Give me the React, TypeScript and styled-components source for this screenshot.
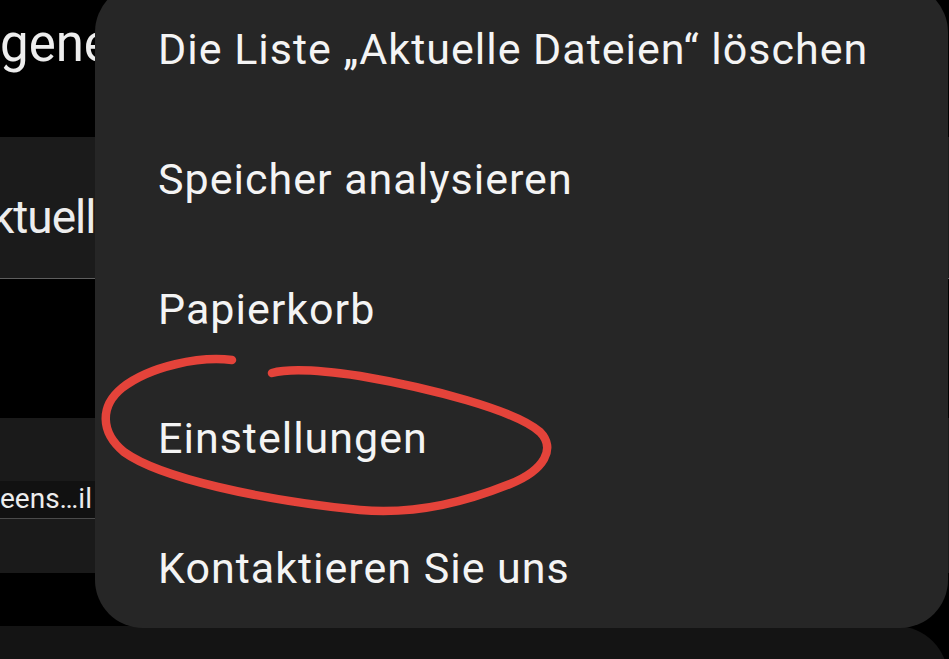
import React from "react";
import styled, { createGlobalStyle } from "styled-components";

const GlobalStyle = createGlobalStyle`
  html, body {
    margin: 0;
    padding: 0;
    background: #000;
    overflow: hidden;
  }
  * { box-sizing: border-box; }
`;

const Screen = styled.div`
  position: relative;
  width: 949px;
  height: 659px;
  overflow: hidden;
  background: #000;
  font-family: Roboto, "Noto Sans", "Liberation Sans", sans-serif;
  color: #ededed;
`;

const Page = styled.div`
  display: flex;
  flex-direction: column;
  width: 100%;
`;

const Header = styled.div`
  height: 137px;
  padding-top: 19px;
  font-size: 51px;
  line-height: 50px;
  white-space: nowrap;
`;

const RecentCard = styled.div`
  height: 142px;
  padding-top: 56px;
  background: #1b1b1b;
  border-bottom: 1px solid #5e5e5e;
  font-size: 46px;
  line-height: 48px;
  letter-spacing: -1px;
  white-space: nowrap;
`;

const Clipped = styled.span<{ $shift: number }>`
  display: inline-block;
  margin-left: ${(p) => p.$shift}px;
`;

const Gap = styled.div<{ $h: number }>`
  height: ${(p) => p.$h}px;
`;

const StorageCard = styled.div`
  height: 155px;
  padding-top: 63px;
  background: #1a1a1a;
`;

const Field = styled.div`
  width: 95px;
  height: 38px;
  background: #111;
  border-bottom: 1px solid #4a4a4a;
  font-size: 28px;
  line-height: 36px;
  white-space: nowrap;
  overflow: hidden;
`;

const BottomCard = styled.div`
  height: 80px;
  margin-right: 1px;
  background: #141414;
  border-radius: 0 52px 0 0;
`;

const Menu = styled.ul`
  position: absolute;
  top: -16px;
  left: 95px;
  width: 853px;
  height: 644px;
  margin: 0;
  padding: 0;
  list-style: none;
  background: #262626;
  border-radius: 48px;
  overflow: hidden;
`;

const MenuItem = styled.li`
  padding: 40px 0 39.75px 63px;
  font-size: 43px;
  line-height: 50px;
  letter-spacing: 1px;
  color: #f4f4f4;
  white-space: nowrap;
`;

const Annotation = styled.svg`
  position: absolute;
  inset: 0;
  width: 949px;
  height: 659px;
  pointer-events: none;
`;

const items = [
  "Die Liste \u201EAktuelle Dateien\u201C löschen",
  "Speicher analysieren",
  "Papierkorb",
  "Einstellungen",
  "Kontaktieren Sie uns",
];

export default function App() {
  return (
    <>
      <GlobalStyle />
      <Screen>
        <Page>
          <Header>gene</Header>
          <RecentCard>
            <Clipped $shift={-9}>ktuell</Clipped>
          </RecentCard>
          <Gap $h={139} />
          <StorageCard>
            <Field>eens…il</Field>
          </StorageCard>
          <Gap $h={53} />
          <BottomCard />
        </Page>
        <Menu>
          {items.map((t) => (
            <MenuItem key={t}>{t}</MenuItem>
          ))}
        </Menu>
        <Annotation viewBox="0 0 949 659">
          <path
            d="M232,360 C200,356 150,366 122,388 C100,406 100,432 124,452 C160,478 260,500 360,510 C420,515 470,500 510,484 C545,470 556,448 540,432 C515,410 430,388 360,376 C320,370 290,368 272,373"
            fill="none"
            stroke="#e4433a"
            strokeWidth={8.5}
            strokeLinecap="round"
            strokeLinejoin="round"
          />
        </Annotation>
      </Screen>
    </>
  );
}
